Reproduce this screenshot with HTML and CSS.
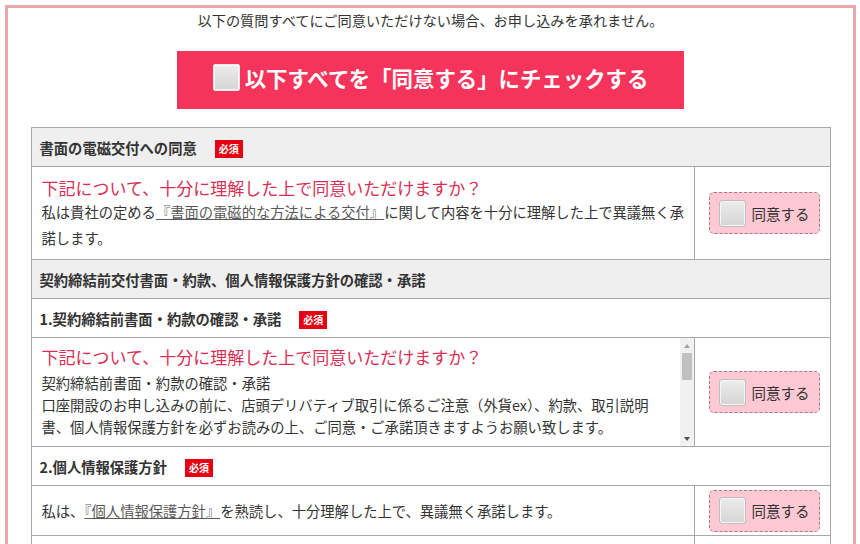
FILE: index.html
```html
<!DOCTYPE html>
<html lang="ja">
<head>
<meta charset="utf-8">
<title>同意確認</title>
<link rel="stylesheet" href="styles.css">
</head>
<body>
<div class="frame">
  <p class="intro">以下の質問すべてにご同意いただけない場合、お申し込みを承れません。</p>
  <div class="all-wrap">
    <button class="all-btn" type="button"><span class="cb cb-lg"></span><span class="all-label">以下すべてを「同意する」にチェックする</span></button>
  </div>
  <table class="qtable">
    <tr class="head gray"><th colspan="2">書面の電磁交付への同意<span class="req">必須</span></th></tr>
    <tr class="q q1">
      <td class="txt">
        <p class="ask">下記について、十分に理解した上で同意いただけますか？</p>
        <p class="body first">私は貴社の定める<a href="#">『書面の電磁的な方法による交付』</a>に関して内容を十分に理解した上で異議無く承諾します。</p>
      </td>
      <td class="chk"><label class="agree"><span class="cb"></span><span>同意する</span></label></td>
    </tr>
    <tr class="head gray"><th colspan="2">契約締結前交付書面・約款、個人情報保護方針の確認・承諾</th></tr>
    <tr class="head"><th colspan="2">1.契約締結前書面・約款の確認・承諾<span class="req">必須</span></th></tr>
    <tr class="q q2">
      <td class="txt scroll-cell">
        <div class="scroller">
          <div class="scroll-content">
            <p class="ask">下記について、十分に理解した上で同意いただけますか？</p>
            <p class="body tight">契約締結前書面・約款の確認・承諾<br>口座開設のお申し込みの前に、店頭デリバティブ取引に係るご注意（外貨ex）、約款、取引説明書、個人情報保護方針を必ずお読みの上、ご同意・ご承諾頂きますようお願い致します。</p>
          </div>
          <div class="sbar"><span class="arr-box"><span class="arr up"></span></span><span class="thumb"></span><span class="track"></span><span class="arr-box"><span class="arr down"></span></span></div>
        </div>
      </td>
      <td class="chk"><label class="agree"><span class="cb"></span><span>同意する</span></label></td>
    </tr>
    <tr class="head"><th colspan="2">2.個人情報保護方針<span class="req">必須</span></th></tr>
    <tr class="q q3">
      <td class="txt single"><p class="body">私は、<a href="#">『個人情報保護方針』</a>を熟読し、十分理解した上で、異議無く承諾します。</p></td>
      <td class="chk"><label class="agree"><span class="cb"></span><span>同意する</span></label></td>
    </tr>
    <tr class="q q4">
      <td class="txt"></td>
      <td class="chk"></td>
    </tr>
  </table>
</div>
</body>
</html>
```

FILE: styles.css
```css
* { box-sizing: border-box; margin: 0; padding: 0; }
body {
  margin: 0;
  background: #fff;
  font-family: "Noto Sans CJK JP", "Noto Sans", sans-serif;
  color: #333;
}
.frame {
  margin: 5px 4px 0 5px;
  border: 3px solid #eda5aa;
  border-bottom: none;
  padding-bottom: 20px;
}
.intro {
  font-size: 14.2px;
  line-height: 24px;
  text-align: center;
  color: #333;
}
.all-wrap {
  display: flex;
  justify-content: center;
  margin-top: 19px;
}
.all-btn {
  width: 507px;
  height: 58px;
  background: #f4345a;
  border: none;
  display: flex;
  align-items: center;
  justify-content: center;
  gap: 5px;
  color: #fff;
  font-family: inherit;
  font-weight: 700;
  font-size: 21.4px;
  padding-bottom: 5px;
  cursor: pointer;
}
.all-label { line-height: 28px; }
.cb {
  display: inline-block;
  flex: none;
  width: 27px;
  height: 27px;
  border: 1px solid #bdbdbd;
  border-radius: 3px;
  background: linear-gradient(#ececec, #d5d5d5);
  box-shadow: inset 0 0 0 1px #f6f6f6;
}
.cb-lg { border-color: #e8e8e8; border-radius: 2px; }

.qtable {
  width: 800px;
  margin: 18px auto 0;
  border-collapse: collapse;
  border: 1px solid #9c9c9c;
}
.qtable th, .qtable td {
  border: 1px solid #a8a8a8;
}
.head th {
  text-align: left;
  font-size: 14.3px;
  font-weight: 700;
  color: #333;
  padding: 0 8px;
  height: 39px;
  background: #fff;
  vertical-align: middle;
}
.head.gray th { background: #efefef; }
.req {
  display: inline-block;
  background: #e60012;
  color: #fff;
  font-size: 10px;
  font-weight: 700;
  width: 28px;
  height: 18px;
  line-height: 18px;
  text-align: center;
  margin-left: 18px;
  vertical-align: 1px;
}
.txt {
  width: 664px;
  vertical-align: top;
  padding: 11px 4px 0 10px;
}
.ask {
  font-size: 17px;
  line-height: 20px;
  color: #d92f55;
}
.body {
  font-size: 14.3px;
  line-height: 26px;
  color: #333;
}
.body.first { margin-top: 1px; }
.body a { color: #5a5a5a; text-decoration: underline; }
.q1 td { height: 93px; }
.chk {
  width: 136px;
  vertical-align: middle;
  padding: 0 0 0 14px;
}
.agree {
  display: flex;
  align-items: center;
  gap: 6px;
  width: 111px;
  height: 42px;
  padding-left: 9px;
  background: #ffc9d3;
  border: 1px dashed #a07c89;
  border-radius: 5px;
  font-size: 14.5px;
  color: #333;
  cursor: pointer;
}
.scroll-cell { padding: 0; height: 109px; }
.scroller {
  display: flex;
  height: 108px;
}
.scroll-content {
  flex: 1;
  overflow: hidden;
  padding: 8px 14px 0 10px;
}
.scroll-content .ask { line-height: 22px; margin-bottom: 4px; }
.body.tight { line-height: 22px; }
.sbar {
  width: 14px;
  flex: none;
  display: flex;
  flex-direction: column;
  background: #f1f1f1;
}
.arr-box {
  height: 15px;
  display: flex;
  align-items: center;
  justify-content: center;
}
.arr {
  width: 0;
  height: 0;
  border-left: 3.5px solid transparent;
  border-right: 3.5px solid transparent;
}
.arr.up { border-bottom: 4px solid #a3a3a3; }
.arr.down { border-top: 4px solid #505050; }
.thumb {
  height: 27px;
  margin: 0 2px;
  background: #c1c1c1;
}
.track { flex: 1; }
.single { vertical-align: middle; padding: 0 10px; height: 50px; }
.q4 td { height: 40px; }
```
